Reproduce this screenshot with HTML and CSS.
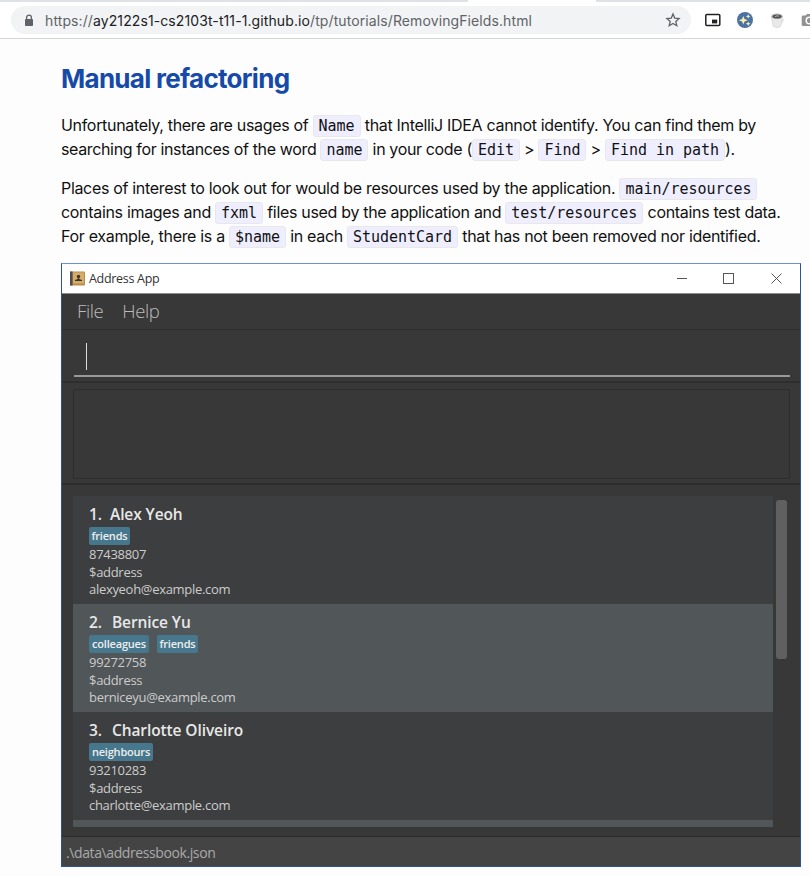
FILE: index.html
```html
<!DOCTYPE html>
<html lang="en">
<head>
<meta charset="utf-8">
<title>Removing Fields</title>
<link rel="stylesheet" href="styles.css">
</head>
<body>
<header class="browser">
  <div class="tabs"><span class="tab"></span></div>
  <div class="toolbar">
    <div class="omnibox">
      <svg class="lock" width="10" height="13" viewBox="0 0 10 13"><path d="M2.6 5.5V3.5a2.4 2.4 0 0 1 4.8 0v2" fill="none" stroke="#5f6368" stroke-width="1.3"/><rect x="1" y="5" width="8" height="7" rx=".8" fill="#5f6368"/></svg>
      <span class="url"><span class="scheme">https://</span><span class="host">ay2122s1-cs2103t-t11-1.github.io</span><span class="path">/tp/tutorials/RemovingFields.html</span></span>
      <svg class="star" width="16" height="16" viewBox="0 0 16 16"><path d="M8 2l1.7 4.1 4.4.4-3.3 2.9 1 4.3L8 11.4l-3.8 2.3 1-4.3-3.3-2.9 4.4-.4z" fill="none" stroke="#5f6368" stroke-width="1.3"/></svg>
    </div>
    <svg class="ext" width="16" height="16" viewBox="0 0 16 16"><rect x=".8" y="2.6" width="14" height="11" rx="1" fill="#fff" stroke="#202124" stroke-width="1.5"/><rect x="7" y="7.6" width="5.2" height="3.8" fill="#202124"/></svg>
    <svg class="ext" width="16" height="16" viewBox="0 0 16 16"><circle cx="8" cy="8" r="8" fill="#4a72a6"/><path d="M6.300 4l1.200 3.100 3.200 1.100-3.200 1.200-1.200 3.100-1.200-3.100-3.200-1.200 3.200-1.100z" fill="#fff3a0"/><path d="M11.200 2l.7 1.700 1.700.7-1.700.7-.7 1.700-.7-1.700-1.700-.7 1.700-.7zM11.200 9.400l.7 1.700 1.700.7-1.700.7-.7 1.700-.7-1.700-1.700-.7 1.700-.7z" fill="#fff3a0"/></svg>
    <svg class="ext" width="16" height="16" viewBox="0 0 16 16"><path d="M2.300 4l1.700 9.500q.6 2 4 2t4-2l1.700-9.500z" fill="#e9e9e9" stroke="#ccc" stroke-width=".6"/><path d="M12.800 6.500q2 .2 1.300 2.300t-2 2" fill="none" stroke="#ddd"/><ellipse cx="8" cy="4.200" rx="5.700" ry="2.800" fill="#bbb"/><ellipse cx="8" cy="4.400" rx="4.500" ry="2" fill="#555"/><path d="M6 4.700q2-1.500 4-.5" stroke="#ccc" fill="none" stroke-width=".8"/></svg>
    <svg class="ext" width="16" height="16" viewBox="0 0 16 16"><path d="M2 3.500h2.500L6 2h5l1.500 1.500H16V14H2q-1.300 0-1.300-1.300v-8Q.7 3.500 2 3.500z" fill="#929292"/><circle cx="8.500" cy="8.500" r="3.300" fill="#929292" stroke="#fff" stroke-width="1.500"/></svg>
  </div>
</header>
<main class="page">
  <h2>Manual refactoring</h2>
  <p>Unfortunately, there are usages of <code>Name</code> that IntelliJ IDEA cannot identify. You can find them by<br>
  <span class="tight">searching for instances of the word <code>name</code> in your code (<code>Edit</code> &gt; <code>Find</code> &gt; <code>Find in path</code>).</span></p>
  <p>Places of interest to look out for would be resources used by the application. <code>main/resources</code><br>
  contains images and <code>fxml</code> files used by the application and <code>test/resources</code> contains test data.<br>
  For example, there is a <code>$name</code> in each <code>StudentCard</code> that has not been removed nor identified.</p>

  <section class="app">
    <div class="titlebar">
      <svg class="book" width="16" height="15" viewBox="0 0 16 15"><rect x="0" y=".5" width="15" height="14" rx="1" fill="#b98d48"/><rect x="3" y="1.500" width="11" height="11" fill="#d5ad6b"/><rect x="0" y=".5" width="2.500" height="14" fill="#514d4e"/><circle cx="8.500" cy="5.500" r="1.700" fill="#40352b"/><path d="M5 10V9q3.500-.6 3-2.500h1q-.5 1.900 3 2.500v1z" fill="#40352b"/></svg>
      <span class="title">Address App</span>
      <svg class="controls" width="108" height="14" viewBox="0 0 108 14" fill="none" stroke="#555" stroke-width="1"><path d="M1 7.500h10"/><rect x="47.500" y="2.500" width="10" height="10"/><path d="M95.500 2.500l10 10m0-10l-10 10"/></svg>
    </div>
    <div class="menu"><span class="file">File</span><span class="help">Help</span></div>
    <div class="command"><div class="field"><i class="caret"></i></div></div>
    <div class="result"><div class="output"></div></div>
    <div class="body">
      <div class="list">
        <article class="card"><h3><span class="no">1.</span><span>Alex Yeoh</span></h3><div class="tags"><span class="w41">friends</span></div><div class="tel">87438807</div><div class="adr">$address</div><div class="mail">alexyeoh@example.com</div></article>
        <article class="card alt"><h3><span class="no wide">2.</span><span>Bernice Yu</span></h3><div class="tags"><span class="w60">colleagues</span><span class="w41">friends</span></div><div class="tel">99272758</div><div class="adr">$address</div><div class="mail">berniceyu@example.com</div></article>
        <article class="card"><h3><span class="no wide">3.</span><span>Charlotte Oliveiro</span></h3><div class="tags"><span class="w64">neighbours</span></div><div class="tel">93210283</div><div class="adr">$address</div><div class="mail">charlotte@example.com</div></article>
        <article class="card alt"></article>
      </div>
      <div class="thumb"></div>
    </div>
    <footer class="status"><span>.\data\addressbook.json</span></footer>
  </section>
</main>
</body>
</html>
```
FILE: styles.css
```css
* { box-sizing: border-box; }
body { margin: 0; height: 876px; overflow: hidden; background: #fdfdfd; color: #111; font-family: Inter, "Liberation Sans", sans-serif; }
svg { display: block; flex: none; }
.browser { height: 39px; background: #fff; border-bottom: 1px solid #d5d6d8; overflow: hidden; }
.tabs { height: 2px; background: #dee1e6; padding-left: 468px; }
.tab { display: block; width: 128px; height: 2px; background: #fff; }
.toolbar { display: flex; align-items: center; gap: 16px; height: 36px; padding-left: 11px; }
.omnibox { display: flex; flex: none; align-items: center; width: 680px; height: 28px; border-radius: 14px; background: #f1f3f4; padding: 0 10px 0 13px; margin-right: -2px; }
.url { margin-left: 11px; flex: 1; font-size: 14px; white-space: nowrap; color: #5f6368; letter-spacing: .1px; }
.host { color: #202124; }
.page { padding-left: 61px; }
h2 { margin: 24px 0 18px; font-size: 26px; line-height: 32px; color: #154aa8; font-weight: 700; letter-spacing: -.72px; }
p { margin: 0 0 15px; font-size: 16px; line-height: 24px; white-space: nowrap; letter-spacing: -.32px; }
.tight { letter-spacing: -.36px; }
code { display: inline-block; height: 22px; line-height: 20px; padding: 0 5px; border: 1px solid #e8e8e8; border-radius: 3px; background: #eef; font-family: "DejaVu Sans Mono", monospace; font-size: 15px; letter-spacing: -.03px; vertical-align: top; margin-top: 2px; }
.app { width: 740px; height: 604px; margin-top: 14px; border: 1px solid #2c539b; border-top-color: #6d91d5; background: #383838; font-family: "Open Sans", sans-serif; color: #ccc; }
.titlebar { display: flex; align-items: center; height: 30px; background: #fff; border-bottom: 1px solid #8c8c8c; padding-left: 8px; }
.title { margin-left: 3px; color: #333; font-size: 12.500px; letter-spacing: -.3px; }
.controls { margin: -2px 16px 0 auto; }
.menu { height: 36px; display: flex; gap: 19px; padding-left: 15px; line-height: 34px; font-weight: 300; font-size: 18.500px; letter-spacing: -.4px; color: #bbb; border-bottom: 1px solid #2e2e2e; }
.command { height: 53px; padding: 0 10px 0 12px; border-bottom: 2px solid #2e2e2e; }
.field { height: 47px; border-bottom: 2px solid #999; padding: 13px 0 0 12px; }
.caret { display: block; width: 1px; height: 27px; background: #ddd; }
.result { height: 102px; padding: 6px 10px 0 11px; border-bottom: 2px solid #2c2c2c; }
.output { height: 90px; border: 1px solid #2d2d2d; }
.body { display: flex; gap: 3px; height: 352px; padding: 11px 0 0 11px; border-bottom: 1px solid #2c2c2c; }
.list { width: 700px; height: 331px; overflow: hidden; }
.card { height: 108px; padding: 8px 16px; background: #3c3e3f; font-size: 13px; line-height: 17.700px; letter-spacing: -.3px; }
.tel, .adr, .mail { padding-top: 1px; margin-bottom: -1px; }
.alt { background: #515658; }
.thumb { width: 11px; height: 159px; margin-top: 4px; border-radius: 3px; background: #606060; }
h3 { display: flex; margin: 0; height: 23px; line-height: 20px; color: #e8e8e8; font-size: 15.500px; font-weight: 600; letter-spacing: -.1px; }
.no { width: 21px; }
.wide { width: 23px; }
.tags { display: flex; gap: 8px; height: 18px; }
.tags span { height: 18px; border-radius: 2px; background: #47778c; color: #eee; font-weight: 600; font-size: 11px; line-height: 18px; letter-spacing: -.2px; text-align: center; white-space: nowrap; }
.w41 { width: 41px; }
.w60 { width: 60px; }
.w64 { width: 64px; }
.status { height: 29px; background: #444; padding-left: 4px; color: #aaa; font-size: 14px; line-height: 31px; letter-spacing: -.4px; }
```
